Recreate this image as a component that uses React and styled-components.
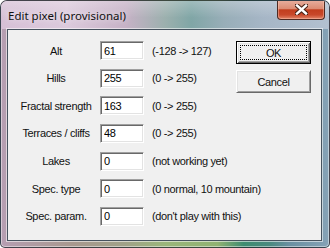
import React from "react";
import styled, { createGlobalStyle } from "styled-components";

const GlobalStyle = createGlobalStyle`
  html, body {
    margin: 0;
    padding: 0;
    background: #ffffff;
  }
  body {
    width: 330px;
    height: 248px;
    overflow: hidden;
  }
`;

const fields = [
  { label: "Alt", value: "61", hint: "(-128 -> 127)" },
  { label: "Hills", value: "255", hint: "(0 -> 255)" },
  { label: "Fractal strength", value: "163", hint: "(0 -> 255)" },
  { label: "Terraces / cliffs", value: "48", hint: "(0 -> 255)" },
  { label: "Lakes", value: "0", hint: "(not working yet)" },
  { label: "Spec. type", value: "0", hint: "(0 normal, 10 mountain)" },
  { label: "Spec. param.", value: "0", hint: "(don't play with this)" },
];

function CloseIcon() {
  return (
    <svg width="13" height="11" viewBox="0 0 13 11">
      <path d="M2 1.5 L11 9.5 M11 1.5 L2 9.5" stroke="#4a2418" strokeWidth="4.6" strokeLinecap="square" />
      <path d="M2 1.5 L11 9.5 M11 1.5 L2 9.5" stroke="#ffffff" strokeWidth="2.4" strokeLinecap="square" />
    </svg>
  );
}

function App() {
  return (
    <>
      <GlobalStyle />
      <Window>
        <TitleBar>
          <Title>Edit pixel (provisional)</Title>
          <CloseButton>
            <CloseIcon />
          </CloseButton>
        </TitleBar>
        <Body>
          <Client>
            <Form>
              {fields.map((f) => (
                <React.Fragment key={f.label}>
                  <Label>{f.label}</Label>
                  <Field defaultValue={f.value} readOnly />
                  <Hint>{f.hint}</Hint>
                </React.Fragment>
              ))}
            </Form>
            <Buttons>
              <Button $primary>
                <Focus>OK</Focus>
              </Button>
              <Button>Cancel</Button>
            </Buttons>
          </Client>
        </Body>
      </Window>
    </>
  );
}

const Window = styled.div`
  box-sizing: border-box;
  width: 330px;
  height: 248px;
  display: flex;
  flex-direction: column;
  border: 1px solid rgba(30, 36, 44, 0.75);
  border-radius: 7px 7px 5px 5px;
  overflow: hidden;
  box-shadow: inset 0 0 0 1px rgba(255, 255, 255, 0.45);
  background: linear-gradient(
    to right,
    #b69eb2 0%,
    #a8988e 22%,
    #a0a288 38%,
    #9ab67a 50%,
    #90b272 66%,
    #3e8c70 74%,
    #4a8a80 82%,
    #6a90a2 88%,
    #86a2b6 100%
  );
`;

const TitleBar = styled.div`
  height: 28px;
  flex: none;
  display: flex;
  align-items: flex-start;
  justify-content: space-between;
  padding-left: 7px;
  background:
    linear-gradient(to bottom, rgba(255, 255, 255, 0.25), rgba(255, 255, 255, 0) 60%),
    linear-gradient(
      to right,
      #d6c0d6 0%,
      #dccadc 20%,
      #c6b2c6 38%,
      #9cb0ae 50%,
      #80a6a6 58%,
      #98aeb8 68%,
      #a6b6c6 80%,
      #b2c0d0 100%
    );
`;

const Title = styled.span`
  margin-top: 7px;
  font-family: "Noto Sans", "Open Sans", sans-serif;
  font-size: 11.5px;
  color: #101010;
  text-shadow: 0 0 6px rgba(255, 255, 255, 0.9);
`;

const CloseButton = styled.div`
  box-sizing: border-box;
  width: 48px;
  height: 20px;
  margin-top: -1px;
  margin-right: 4px;
  display: flex;
  align-items: center;
  justify-content: center;
  border: 1px solid #4e2a22;
  border-top: none;
  border-radius: 0 0 4px 4px;
  box-shadow: inset 0 0 0 1px rgba(255, 200, 180, 0.45);
  background: linear-gradient(
    to bottom,
    #e8b0a0 0%,
    #dc8c74 45%,
    #c23e1e 52%,
    #c8482a 78%,
    #e2866a 100%
  );
`;

const Body = styled.div`
  flex: 1;
  display: flex;
  padding: 0 7px 6px 6px;
`;

const Client = styled.div`
  box-sizing: border-box;
  flex: 1;
  min-width: 0;
  display: flex;
  border: 1px solid #46525e;
  box-shadow: 0 0 0 1px rgba(255, 255, 255, 0.55);
  background: #f0f0f0;
  font-family: "Liberation Sans", Arial, sans-serif;
  font-size: 11px;
  letter-spacing: -0.35px;
  color: #111;
`;

const Form = styled.div`
  flex: 1;
  min-width: 0;
  display: grid;
  grid-template-columns: 76px 44px auto;
  grid-auto-rows: 19px;
  column-gap: 6px;
  row-gap: 8.67px;
  align-content: start;
  padding: 11px 0 0 10px;
`;

const Label = styled.span`
  display: flex;
  align-items: center;
  justify-content: center;
  white-space: nowrap;
`;

const Field = styled.input`
  box-sizing: border-box;
  width: 44px;
  height: 19px;
  margin: 0;
  padding: 0 0 0 3px;
  font: inherit;
  letter-spacing: inherit;
  color: #000;
  background: #fff;
  border-top: 1px solid #a0a0a0;
  border-left: 1px solid #a0a0a0;
  border-bottom: 1px solid #fff;
  border-right: 1px solid #fff;
  box-shadow: inset 1px 1px 0 #696969, inset -1px -1px 0 #e3e3e3;
  outline: none;
`;

const Hint = styled.span`
  display: flex;
  align-items: center;
  padding-left: 2px;
  white-space: nowrap;
`;

const Buttons = styled.div`
  flex: none;
  width: 75px;
  display: flex;
  flex-direction: column;
  gap: 6px;
  padding: 11px 10px 0 0;
`;

const Button = styled.div`
  box-sizing: border-box;
  width: 75px;
  height: 23px;
  display: flex;
  align-items: center;
  justify-content: center;
  padding: ${(p) => (p.$primary ? "3px" : "0")};
  background: #f0f0f0;
  border: 1px solid ${(p) => (p.$primary ? "#000" : "transparent")};
  border-top-color: ${(p) => (p.$primary ? "#000" : "#fff")};
  border-left-color: ${(p) => (p.$primary ? "#000" : "#fff")};
  border-bottom-color: ${(p) => (p.$primary ? "#000" : "#696969")};
  border-right-color: ${(p) => (p.$primary ? "#000" : "#696969")};
  box-shadow: ${(p) =>
    p.$primary
      ? "inset 1px 1px 0 #fff, inset -1px -1px 0 #696969, inset 2px 2px 0 #e3e3e3, inset -2px -2px 0 #a0a0a0"
      : "inset 1px 1px 0 #e3e3e3, inset -1px -1px 0 #a0a0a0"};
`;

const Focus = styled.span`
  box-sizing: border-box;
  flex: 1;
  align-self: stretch;
  display: flex;
  align-items: center;
  justify-content: center;
  border: 1px dotted #000;
`;

export default App;
